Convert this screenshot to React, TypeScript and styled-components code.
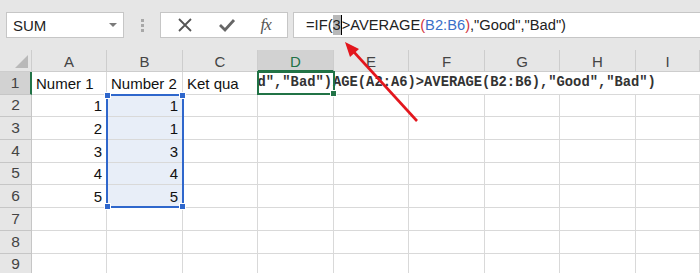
import React from 'react';
import styled, { createGlobalStyle } from 'styled-components';

const GlobalStyle = createGlobalStyle`
  html, body {
    margin: 0;
    padding: 0;
    background: #ffffff;
    overflow: hidden;
  }
  body {
    font-family: 'Liberation Sans', Arial, sans-serif;
  }
`;

const Page = styled.div`
  position: relative;
  width: 700px;
  height: 273px;
  overflow: hidden;
  background: #ffffff;
`;

const Toolbar = styled.div`
  height: 50px;
  background: #e6e6e6;
  display: flex;
  align-items: center;
  padding-left: 6px;
  box-sizing: border-box;
`;

const NameBox = styled.div`
  width: 118px;
  height: 26px;
  box-sizing: border-box;
  background: #ffffff;
  border: 1px solid #c6c6c6;
  display: flex;
  align-items: center;
  justify-content: space-between;
  padding: 0 6px 0 6px;
  font-size: 15px;
  color: #222;
`;

const DropArrow = styled.span`
  width: 0;
  height: 0;
  border-left: 4px solid transparent;
  border-right: 4px solid transparent;
  border-top: 4px solid #7a7a7a;
`;

const Grip = styled.div`
  width: 36px;
  display: flex;
  flex-direction: column;
  align-items: center;
  gap: 2px;
  span {
    width: 3px;
    height: 3px;
    background: #a8a8a8;
  }
`;

const ButtonBox = styled.div`
  width: 128px;
  height: 26px;
  box-sizing: border-box;
  background: #ffffff;
  border: 1px solid #c6c6c6;
  display: flex;
  align-items: center;
  justify-content: space-around;
  padding: 0 4px;
`;

const Fx = styled.span`
  font-family: 'Liberation Serif', 'Times New Roman', serif;
  font-style: italic;
  font-size: 17px;
  color: #555;
  letter-spacing: -1px;
`;

const FormulaBox = styled.div`
  flex: 1;
  margin-left: 5px;
  height: 26px;
  box-sizing: border-box;
  background: #ffffff;
  border: 1px solid #c6c6c6;
  border-right: none;
  display: flex;
  align-items: center;
  padding-left: 12px;
  font-size: 14.7px;
  color: #222;
  white-space: nowrap;
`;

const Tok = styled.span<{ $c?: string }>`
  color: ${(p) => p.$c || '#222'};
`;

const Picked = styled.span`
  background: #b8b8b8;
  padding: 2px 0;
  border-right: 1px solid #000;
`;

const Sheet = styled.div`
  display: grid;
  grid-template-columns: 32px 75px 76px 75px 76px 75px 76px 75px 76px 1fr;
  grid-template-rows: 22px repeat(9, 22.7px);
  background: #ffffff;
`;

// every grid item sits at its own row / column so the overlays can share cells
const Slot = styled.div<{ $r: number; $c: number }>`
  grid-row: ${(p) => p.$r};
  grid-column: ${(p) => p.$c};
`;

const Corner = styled(Slot)`
  background: #e6e6e6;
  border-right: 1px solid #cdcdcd;
  border-bottom: 1px solid #cdcdcd;
  position: relative;
  &::after {
    content: '';
    position: absolute;
    right: 3px;
    bottom: 3px;
    width: 0;
    height: 0;
    border-left: 13px solid transparent;
    border-bottom: 13px solid #b9b9b9;
  }
`;

const ColHead = styled(Slot)<{ $active?: boolean }>`
  background: ${(p) => (p.$active ? '#d2d2d2' : '#e6e6e6')};
  color: ${(p) => (p.$active ? '#217346' : '#444')};
  border-right: 1px solid #cdcdcd;
  border-bottom: ${(p) => (p.$active ? '2px solid #217346' : '1px solid #cdcdcd')};
  font-size: 15px;
  display: flex;
  align-items: center;
  justify-content: center;
  padding-top: 2px;
  box-sizing: border-box;
`;

const RowHead = styled(Slot)<{ $active?: boolean }>`
  background: ${(p) => (p.$active ? '#d2d2d2' : '#e6e6e6')};
  color: #444;
  border-right: ${(p) => (p.$active ? '2px solid #217346' : '1px solid #c6c6c6')};
  border-bottom: 1px solid #c6c6c6;
  font-size: 15.5px;
  display: flex;
  align-items: flex-end;
  justify-content: center;
  padding-bottom: 2px;
  box-sizing: border-box;
`;

const Cell = styled(Slot)<{ $right?: boolean; $sel?: boolean }>`
  background: ${(p) => (p.$sel ? '#e8eef8' : 'transparent')};
  border-right: 1px solid #d9d9d9;
  border-bottom: 1px solid #d9d9d9;
  font-size: 15px;
  color: #111;
  display: flex;
  align-items: flex-end;
  justify-content: ${(p) => (p.$right ? 'flex-end' : 'flex-start')};
  padding: 0 4px 2px 4px;
  box-sizing: border-box;
  white-space: nowrap;
  min-width: 0;
`;

const Code = styled.span`
  font-family: 'Liberation Mono', 'Courier New', monospace;
  font-weight: bold;
  font-size: 13.8px;
  color: #333;
  margin-bottom: 1px;
`;

const EditCell = styled.div`
  grid-column: 5 / 6;
  grid-row: 2 / 3;
  overflow: hidden;
  display: flex;
  align-items: center;
  justify-content: flex-end;
  padding-right: 2px;
  white-space: nowrap;
  border-bottom: 1px solid #d9d9d9;
`;

const Overflow = styled.div`
  grid-column: 6 / 11;
  grid-row: 2 / 3;
  display: flex;
  align-items: center;
  margin-left: -1px;
  white-space: nowrap;
  border-bottom: 1px solid #d9d9d9;
`;

const Range = styled.div<{ $col: string; $row: string; $color: string }>`
  grid-column: ${(p) => p.$col};
  grid-row: ${(p) => p.$row};
  border: 2px solid ${(p) => p.$color};
  margin: -1px -1px 0 -1px;
  position: relative;
  pointer-events: none;
`;

const Handle = styled.span<{ $pos: string; $color: string }>`
  position: absolute;
  width: 5px;
  height: 5px;
  background: ${(p) => p.$color};
  border: 1px solid #ffffff;
  ${(p) => (p.$pos.includes('t') ? 'top: -4px;' : 'bottom: -4px;')}
  ${(p) => (p.$pos.includes('l') ? 'left: -4px;' : 'right: -4px;')}
`;

const ArrowLayer = styled.svg`
  position: absolute;
  left: 0;
  top: 0;
  pointer-events: none;
`;

const cols = ['A', 'B', 'C', 'D', 'E', 'F', 'G', 'H', 'I'];
const aVals = [1, 2, 3, 4, 5];
const bVals = [1, 1, 3, 4, 5];
const titles: Record<string, string> = { A: 'Numer 1', B: 'Number 2', C: 'Ket qua' };

const App: React.FC = () => {
  const cells = [];
  for (let r = 1; r <= 9; r++) {
    const gr = r + 1;
    cells.push(
      <RowHead key={'h' + r} $r={gr} $c={1} $active={r === 1}>
        {r}
      </RowHead>
    );
    cols.forEach((c, i) => {
      const gc = i + 2;
      const key = c + r;
      if (r === 1) {
        if (titles[c])
          cells.push(
            <Cell key={key} $r={gr} $c={gc}>
              {titles[c]}
            </Cell>
          );
        return;
      }
      const idx = r - 2;
      let value: number | undefined;
      if (idx < 5 && c === 'A') value = aVals[idx];
      if (idx < 5 && c === 'B') value = bVals[idx];
      cells.push(
        <Cell key={key} $r={gr} $c={gc} $right $sel={c === 'B' && idx < 5}>
          {value}
        </Cell>
      );
    });
  }

  return (
    <Page>
      <GlobalStyle />
      <Toolbar>
        <NameBox>
          SUM
          <DropArrow />
        </NameBox>
        <Grip>
          <span />
          <span />
          <span />
        </Grip>
        <ButtonBox>
          <svg width="16" height="16" viewBox="0 0 16 16">
            <path d="M2 2 L14 14 M14 2 L2 14" stroke="#555" strokeWidth="1.8" fill="none" />
          </svg>
          <svg width="18" height="16" viewBox="0 0 18 16">
            <path d="M2 8 L7 13 L16 3" stroke="#666" strokeWidth="2.8" fill="none" />
          </svg>
          <Fx>fx</Fx>
        </ButtonBox>
        <FormulaBox>
          =IF(<Picked>3</Picked>&gt;AVERAGE<Tok $c="#d2353d">(</Tok>
          <Tok $c="#3a6fc8">B2:B6</Tok>
          <Tok $c="#d2353d">)</Tok>,"Good","Bad")
        </FormulaBox>
      </Toolbar>
      <Sheet>
        <Corner $r={1} $c={1} />
        {cols.map((c, i) => (
          <ColHead key={c} $r={1} $c={i + 2} $active={c === 'D'}>
            {c}
          </ColHead>
        ))}
        {cells}
        <EditCell>
          <Code>ood","Bad")</Code>
        </EditCell>
        <Overflow>
          <Code>AGE(A2:A6)&gt;AVERAGE(B2:B6),"Good","Bad")</Code>
        </Overflow>
        <Range $col="3 / 4" $row="3 / 8" $color="#2f67cc">
          <Handle $pos="tl" $color="#2f67cc" />
          <Handle $pos="tr" $color="#2f67cc" />
          <Handle $pos="bl" $color="#2f67cc" />
          <Handle $pos="br" $color="#2f67cc" />
        </Range>
        <Range $col="5 / 6" $row="2 / 3" $color="#217346">
          <Handle $pos="br" $color="#217346" />
        </Range>
      </Sheet>
      <ArrowLayer width="700" height="273">
        <line x1="417" y1="121" x2="353" y2="51" stroke="#e3161d" strokeWidth="2.6" />
        <polygon points="345,42 359,49 350,57" fill="#e3161d" />
      </ArrowLayer>
    </Page>
  );
};

export default App;
